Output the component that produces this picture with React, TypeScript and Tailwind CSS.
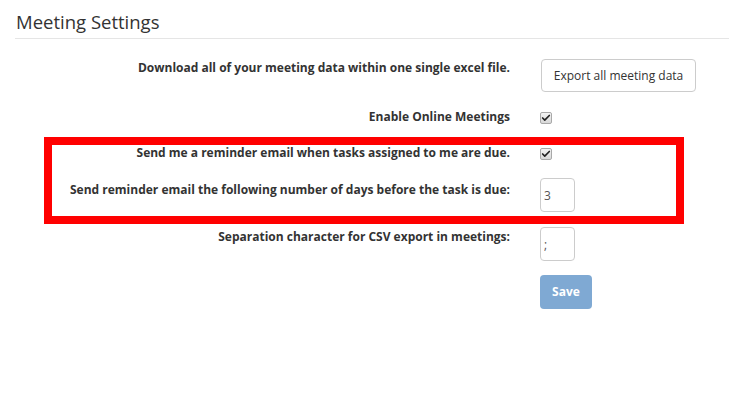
import { Check } from "lucide-react";

const label = "w-[510px] shrink-0 text-right font-bold text-[#333] text-[12px] leading-[18px]";

function FakeCheckbox() {
  return (
    <span className="mt-[4px] flex h-[12px] w-[12px] items-center justify-center rounded-[2px] border border-[#a9a9a9] bg-gradient-to-b from-[#f4f4f4] to-[#d8d8d8]">
      <Check className="h-[10px] w-[10px] text-[#222]" strokeWidth={4} />
    </span>
  );
}

export default function App() {
  return (
    <div className="relative min-h-[411px] w-[729px] overflow-hidden bg-white font-['Open_Sans',sans-serif] text-[#333]">
      {/* titulo */}
      <div className="ml-[15px] border-b border-[#e5e5e5] pb-[4px] pt-[10px]">
        <h1 className="pl-[1px] text-[18.5px] leading-[24px] text-[#333]">Meeting Settings</h1>
      </div>

      <div className="mt-[20px] flex flex-col">
        <div className="flex h-[33px] gap-[30px]">
          <div className={label}>Download all of your meeting data within one single excel file.</div>
          <button className="ml-[1px] h-[33px] w-[155px] rounded-[4px] border border-[#ccc] bg-white text-[12px] text-[#333]">
            Export all meeting data
          </button>
        </div>

        <div className="mt-[16px] flex h-[20px] gap-[30px]">
          <div className={label}>Enable Online Meetings</div>
          <FakeCheckbox />
        </div>

        <div className="mt-[16px] flex h-[20px] gap-[30px]">
          <div className={label}>Send me a reminder email when tasks assigned to me are due.</div>
          <FakeCheckbox />
        </div>

        <div className="mt-[14px] flex h-[34px] gap-[30px]">
          <div className={`${label} pt-[3px]`}>Send reminder email the following number of days before the task is due:</div>
          <input
            readOnly
            value="3"
            className="h-[34px] w-[35px] rounded-[4px] border border-[#ccc] px-[3px] text-[12px] text-[#555] outline-none"
          />
        </div>

        <div className="mt-[15px] flex h-[34px] gap-[30px]">
          <div className={`${label} pt-[1px]`}>Separation character for CSV export in meetings:</div>
          <input
            readOnly
            value=";"
            className="h-[34px] w-[35px] rounded-[4px] border border-[#ccc] px-[3px] text-[12px] text-[#555] outline-none"
          />
        </div>

        <div className="mt-[14px] flex h-[34px] gap-[30px]">
          <div className="w-[510px] shrink-0" />
          <button disabled className="h-[34px] w-[52px] rounded-[4px] bg-[#7fa9d3] text-[12px] font-bold text-white">
            Save
          </button>
        </div>
      </div>

      {/* marco rojo de anotacion */}
      <div className="pointer-events-none absolute left-[44px] top-[137px] h-[87px] w-[640px] border-[8px] border-[#ff0000]" />
    </div>
  );
}
